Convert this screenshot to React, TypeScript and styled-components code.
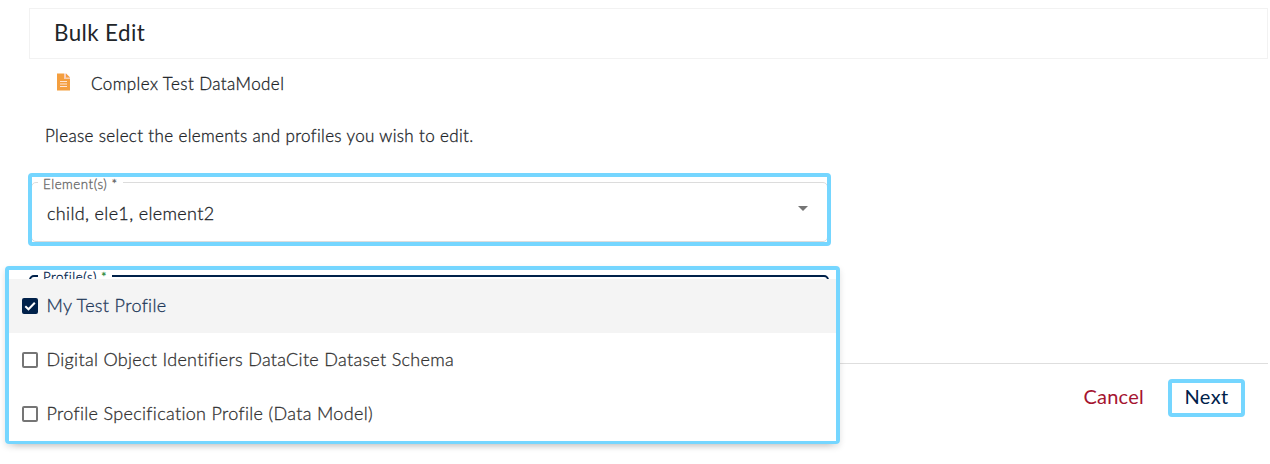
import React from "react";
import styled, { createGlobalStyle } from "styled-components";

const Global = createGlobalStyle`
  * { box-sizing: border-box; }
  body { margin: 0; background: #fff; color: #212529; font-family: Lato, "Open Sans", sans-serif; overflow: hidden; }
`;

const Page = styled.main`
  position: relative;
  display: flex;
  flex-direction: column;
  height: 464px;
  padding: 8px 2px 0 29px;
`;

const Text = styled.span<{ $size: number; $spacing?: number; $weight?: number }>`
  font-size: ${(p) => p.$size}px;
  font-weight: ${(p) => p.$weight ?? 300};
  letter-spacing: ${(p) => p.$spacing ?? 0}px;
  -webkit-text-stroke: ${(p) => (p.$weight ? 0 : 0.3)}px currentColor;
  white-space: nowrap;
`;

const Header = styled.header`
  display: flex;
  align-items: center;
  height: 51px;
  padding: 0 24px 2px;
  border: 1px solid #f2f2f2;
`;

const ModelRow = styled.div`
  display: flex;
  align-items: center;
  height: 50px;
  padding: 0 0 2px 27px;
  gap: 21px;
  svg { margin-top: -3px; }
`;

const Prompt = styled.div`
  display: flex;
  align-items: center;
  height: 54px;
  padding: 0 0 2px 16px;
`;

const Highlight = styled.div`
  border: 4px solid #75d6ff;
  border-radius: 4px;
`;

const ElementHighlight = styled(Highlight)`
  width: 803px;
  height: 73px;
  margin: 10px 0 0 -1px;
  padding-top: 5px;
  overflow: hidden;
`;

const Outline = styled.div<{ $active?: boolean }>`
  display: flex;
  align-items: center;
  justify-content: space-between;
  position: relative;
  width: ${(p) => (p.$active ? 800 : 797)}px;
  height: 60px;
  margin: ${(p) => (p.$active ? "29px 0 0" : "0 0 0 -1px")};
  padding: 2px 19px 0 15px;
  border: ${(p) => (p.$active ? "2px solid #00214a" : "1px solid #dcdcdc")};
  border-radius: 5px;
`;

const Legend = styled.span<{ $active?: boolean }>`
  position: absolute;
  top: ${(p) => (p.$active ? -9 : -8)}px;
  left: ${(p) => (p.$active ? 7 : 6)}px;
  height: 17px;
  padding: 0 5px;
  line-height: 15px;
  background: #fff;
  color: ${(p) => (p.$active ? "#00214a" : "#666")};
  i { font-style: normal; color: ${(p) => (p.$active ? "#2e8b3d" : "inherit")}; }
`;

const Caret = styled.span`
  border: 5px solid transparent;
  border-top-color: #757575;
  border-bottom: 0;
  margin-top: -9px;
`;

const Menu = styled(Highlight)`
  position: absolute;
  left: 5px;
  top: 266px;
  width: 835px;
  height: 178px;
  padding-top: 9px;
  box-shadow: 0 10px 6px -9px rgba(0, 0, 0, 0.15), 0 3px 6px 0 rgba(0, 0, 0, 0.12);
`;

const Option = styled.div<{ $selected?: boolean }>`
  display: flex;
  align-items: center;
  gap: 8.5px;
  height: 54px;
  padding-left: 13px;
  color: ${(p) => (p.$selected ? "#1f395a" : "#333")};
  background: ${(p) => (p.$selected ? "#f4f4f4" : "#fff")};
  > :last-child { margin-top: -2px; }
`;

const Check = styled.span<{ $on?: boolean }>`
  display: flex;
  width: 16px;
  height: 16px;
  border: 2px solid ${(p) => (p.$on ? "#00214a" : "#757575")};
  border-radius: 2px;
  background: ${(p) => (p.$on ? "#00214a" : "#fff")};
`;

const Footer = styled.footer`
  display: flex;
  align-items: flex-start;
  justify-content: flex-end;
  gap: 24px;
  margin-top: 28px;
  padding: 15px 23px 0 0;
  border-top: 1px solid #dedede;
`;

const Action = styled.button<{ $color: string }>`
  display: flex;
  align-items: center;
  height: 38px;
  padding: 0 0 4px;
  border: 0;
  background: none;
  color: ${(p) => p.$color};
  font-family: inherit;
`;

const NextAction = styled(Action)`
  width: 77px;
  padding: 0 0 4px 12.5px;
  border: 4px solid #75d6ff;
  border-radius: 4px;
`;

const FileIcon = () => (
  <svg width="14" height="18" viewBox="0 0 14 18">
    <path d="M1 .5h7v5h6v12H1z" fill="#f49f3f" />
    <path d="M8 .5h2l4 4v1H8z" fill="#f8cfc0" />
    <path d="M10 .5 14 4.5h-4z" fill="#f49f3f" />
    <path d="M4 8.5h7M4 11h7M4 13.5h7" stroke="#ffe5d6" strokeWidth="1.2" />
  </svg>
);

const options = [
  { name: "My Test Profile", on: true, spacing: 0.35 },
  { name: "Digital Object Identifiers DataCite Dataset Schema", on: false, spacing: 0.31 },
  { name: "Profile Specification Profile (Data Model)", on: false, spacing: 0.33 },
];

export default function App() {
  return (
    <Page>
      <Global />
      <Header><Text $size={22.4} $weight={400} $spacing={0.4}>Bulk Edit</Text></Header>
      <ModelRow><FileIcon /><Text $size={17} $spacing={0.42}>Complex Test DataModel</Text></ModelRow>
      <Prompt><Text $size={17} $spacing={0.35}>Please select the elements and profiles you wish to edit.</Text></Prompt>
      <ElementHighlight>
        <Outline>
          <Legend><Text $size={13.3} $spacing={0.54}>Element(s) *</Text></Legend>
          <Text $size={18} $spacing={0.35}>child, ele1, element2</Text>
          <Caret />
        </Outline>
      </ElementHighlight>
      <Outline $active>
        <Legend $active><Text $size={13.3} $spacing={0.54}>Profile(s) <i>*</i></Text></Legend>
      </Outline>
      <Footer>
        <Action $color="#a51430"><Text $size={20} $weight={400} $spacing={0.25}>Cancel</Text></Action>
        <NextAction $color="#00214a"><Text $size={20} $weight={400} $spacing={0.4}>Next</Text></NextAction>
      </Footer>
      <Menu>
        {options.map((o) => (
          <Option key={o.name} $selected={o.on}>
            <Check $on={o.on}>
              {o.on && (
                <svg width="12" height="12" viewBox="0 0 12 12">
                  <path d="M1.3 6.2 4.5 9.3 10.8 2.8" fill="none" stroke="#fff" strokeWidth="2" />
                </svg>
              )}
            </Check>
            <Text $size={18} $spacing={o.spacing}>{o.name}</Text>
          </Option>
        ))}
      </Menu>
    </Page>
  );
}
